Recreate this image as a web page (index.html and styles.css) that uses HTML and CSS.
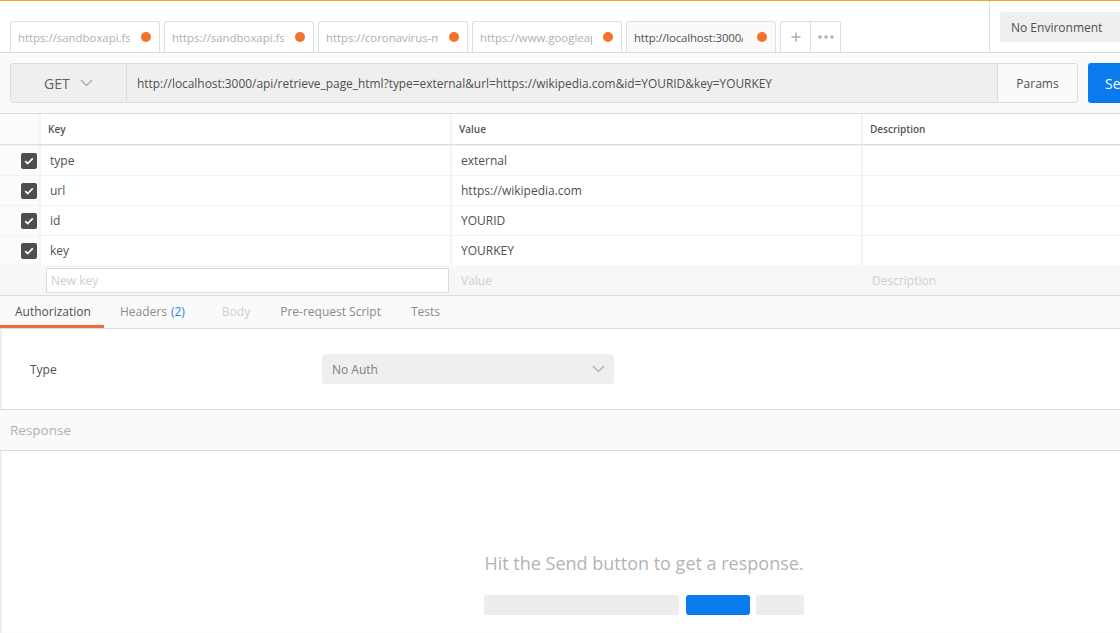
FILE: index.html
```html
<!DOCTYPE html>
<html>
<head>
<meta charset="utf-8">
<link rel="stylesheet" href="styles.css">
</head>
<body>
<div class="app">
  <div class="topbar">
    <div class="tabs">
      <div class="tab"><span class="tab-text">https://sandboxapi.fsnotify.com/v1/users</span><span class="dot"></span></div>
      <div class="tab"><span class="tab-text">https://sandboxapi.fsnotify.com/v1/events</span><span class="dot"></span></div>
      <div class="tab"><span class="tab-text">https://coronavirus-monitor.p.rapidapi.com</span><span class="dot"></span></div>
      <div class="tab"><span class="tab-text">https://www.googleapis.com/customsearch/v1</span><span class="dot"></span></div>
      <div class="tab active"><span class="tab-text">http://localhost:3000/api/retrieve_page_html</span><span class="dot"></span></div>
      <div class="tab-tools">
        <div class="tool"><svg width="10" height="10" viewBox="0 0 10 10"><path d="M5 0.5v9M0.5 5h9" stroke="#a9a9a9" stroke-width="1.4" fill="none"/></svg></div>
        <div class="tool"><svg width="16" height="4" viewBox="0 0 16 4"><circle cx="2" cy="2" r="1.8" fill="#b0b0b0"/><circle cx="8" cy="2" r="1.8" fill="#b0b0b0"/><circle cx="14" cy="2" r="1.8" fill="#b0b0b0"/></svg></div>
      </div>
    </div>
    <div class="env-area">
      <div class="env">No Environment</div>
    </div>
  </div>

  <div class="request-bar">
    <div class="method"><span>GET</span><svg class="chev" width="13" height="8" viewBox="0 0 13 8"><path d="M1 1l5.5 5.5L12 1" stroke="#aaa" stroke-width="1.3" fill="none"/></svg></div>
    <div class="url">http://localhost:3000/api/retrieve_page_html?type=external&amp;url=https://wikipedia.com&amp;id=YOURID&amp;key=YOURKEY</div>
    <div class="params">Params</div>
    <div class="send">Send</div>
    <div class="save">Save</div>
  </div>

  <div class="params-table">
    <div class="row head">
      <div class="cell check"></div>
      <div class="cell">Key</div>
      <div class="cell">Value</div>
      <div class="cell">Description</div>
    </div>
    <div class="row">
      <div class="cell check"><span class="box"><svg width="10" height="8" viewBox="0 0 10 8"><path d="M1.2 4.2l2.5 2.4L8.8 1.4" stroke="#fff" stroke-width="1.8" fill="none"/></svg></span></div>
      <div class="cell">type</div>
      <div class="cell">external</div>
      <div class="cell"></div>
    </div>
    <div class="row">
      <div class="cell check"><span class="box"><svg width="10" height="8" viewBox="0 0 10 8"><path d="M1.2 4.2l2.5 2.4L8.8 1.4" stroke="#fff" stroke-width="1.8" fill="none"/></svg></span></div>
      <div class="cell">url</div>
      <div class="cell">https://wikipedia.com</div>
      <div class="cell"></div>
    </div>
    <div class="row">
      <div class="cell check"><span class="box"><svg width="10" height="8" viewBox="0 0 10 8"><path d="M1.2 4.2l2.5 2.4L8.8 1.4" stroke="#fff" stroke-width="1.8" fill="none"/></svg></span></div>
      <div class="cell">id</div>
      <div class="cell">YOURID</div>
      <div class="cell"></div>
    </div>
    <div class="row">
      <div class="cell check"><span class="box"><svg width="10" height="8" viewBox="0 0 10 8"><path d="M1.2 4.2l2.5 2.4L8.8 1.4" stroke="#fff" stroke-width="1.8" fill="none"/></svg></span></div>
      <div class="cell">key</div>
      <div class="cell">YOURKEY</div>
      <div class="cell"></div>
    </div>
    <div class="row new">
      <div class="cell check"></div>
      <div class="cell"><div class="new-input">New key</div></div>
      <div class="cell ph">Value</div>
      <div class="cell ph">Description</div>
    </div>
  </div>

  <div class="subtabs">
    <div class="subtab first active">Authorization</div>
    <div class="subtab">Headers <span class="count">(2)</span></div>
    <div class="subtab disabled">Body</div>
    <div class="subtab">Pre-request Script</div>
    <div class="subtab">Tests</div>
  </div>

  <div class="auth">
    <div class="auth-label">Type</div>
    <div class="select"><span>No Auth</span><svg width="13" height="8" viewBox="0 0 13 8"><path d="M1 1l5.5 5.5L12 1" stroke="#b0b0b0" stroke-width="1.3" fill="none"/></svg></div>
  </div>

  <div class="response-bar">Response</div>

  <div class="empty">
    <div class="empty-text">Hit the Send button to get a response.</div>
    <div class="skeleton">
      <span class="sk sk-a"></span>
      <span class="sk sk-b"></span>
      <span class="sk sk-c"></span>
    </div>
  </div>
</div>
</body>
</html>
```

FILE: styles.css
```css
html, body {
  margin: 0;
  padding: 0;
  overflow: hidden;
  background: #fff;
}
body {
  font-family: "Open Sans", "Liberation Sans", sans-serif;
  font-size: 12px;
  color: #505050;
}
.app {
  width: 1288px;
  height: 633px;
  box-shadow: inset 3px 0 3px -2px rgba(0,0,0,0.12);
  background: #fff;
}

/* top bar */
.topbar {
  display: flex;
  height: 51px;
  border-top: 1px solid #f5a623;
  border-bottom: 1px solid #dcdcdc;
  background: #fff;
}
.tabs {
  width: 989px;
  box-sizing: border-box;
  padding-left: 10px;
  display: flex;
  align-items: flex-end;
  gap: 4px;
}
.tab {
  width: 150px;
  height: 31px;
  box-sizing: border-box;
  border: 1px solid #e0e0e0;
  border-bottom: none;
  border-radius: 3px 3px 0 0;
  display: flex;
  align-items: center;
  padding: 0 8px 0 7px;
  color: #b0b0b0;
  background: #fff;
  font-size: 11.4px;
}
.tab.active {
  color: #505050;
  background: #fafafa;
}
.tab-text {
  width: 112px;
  flex: none;
  overflow: hidden;
  white-space: nowrap;
}
.tab.active .tab-text {
  letter-spacing: -0.15px;
  width: 109px;
  margin-right: 3px;
}
.dot {
  width: 10px;
  height: 10px;
  border-radius: 50%;
  background: #f4712b;
  margin-left: 11px;
  flex: none;
}
.tab-tools {
  display: flex;
  height: 31px;
  box-sizing: border-box;
  border: 1px solid #e0e0e0;
  border-bottom: none;
  border-radius: 3px 3px 0 0;
}
.tool {
  width: 29px;
  display: flex;
  align-items: center;
  justify-content: center;
}
.tool + .tool {
  border-left: 1px solid #e0e0e0;
}
.env-area {
  flex: 1;
  border-left: 1px solid #e0e0e0;
  padding: 11px 0 0 10px;
}
.env {
  width: 220px;
  height: 30px;
  box-sizing: border-box;
  background: #efefef;
  border-radius: 3px;
  padding: 0 11px;
  display: flex;
  align-items: center;
  color: #505050;
  font-size: 12px;
}

/* request bar */
.request-bar {
  display: flex;
  padding: 10px;
  background: #fafafa;
  height: 40px;
}
.method {
  width: 117px;
  box-sizing: border-box;
  border: 1px solid #dcdcdc;
  border-radius: 3px 0 0 3px;
  background: #efefef;
  display: flex;
  align-items: center;
  padding-left: 33px;
  font-size: 14px;
  color: #606060;
}
.chev {
  margin-left: 10px;
}
.url {
  flex: 1;
  box-sizing: border-box;
  border-top: 1px solid #dcdcdc;
  border-bottom: 1px solid #dcdcdc;
  background: #efefef;
  padding: 0 10px;
  display: flex;
  align-items: center;
  white-space: nowrap;
  overflow: hidden;
  color: #505050;
  font-size: 11.9px;
}
.params {
  width: 81px;
  box-sizing: border-box;
  border: 1px solid #dcdcdc;
  border-radius: 0 3px 3px 0;
  background: #fafafa;
  display: flex;
  align-items: center;
  justify-content: center;
  color: #505050;
}
.send {
  width: 100px;
  margin-left: 10px;
  background: #097bed;
  border-radius: 3px;
  color: #fff;
  font-size: 14px;
  display: flex;
  align-items: center;
  padding-left: 17px;
  box-sizing: border-box;
}
.save {
  width: 80px;
  margin-left: 10px;
  box-sizing: border-box;
  border: 1px solid #dcdcdc;
  border-radius: 3px;
  display: flex;
  align-items: center;
  justify-content: center;
}

/* params table */
.params-table {
  border-top: 1px solid #dcdcdc;
  border-bottom: 1px solid #dcdcdc;
}
.row {
  display: grid;
  grid-template-columns: 41px 411px 411px 1fr;
  height: 30px;
  box-sizing: border-box;
  border-top: 1px solid #f2f2f2;
}
.row.head {
  height: 31px;
  border-top: none;
  border-bottom: 1px solid #dcdcdc;
  font-size: 10px;
  font-weight: 600;
  color: #555;
}
.cell {
  display: flex;
  align-items: center;
  padding-left: 9px;
  border-right: 2px solid #f4f4f4;
  background: #fff;
  white-space: nowrap;
  overflow: hidden;
}
.row.head .cell {
  padding-left: 7px;
}
.cell:last-child {
  border-right: none;
}
.cell.check {
  padding-left: 0;
  justify-content: flex-end;
  padding-right: 2px;
  background: #fbfbfb;
}
.row.head .cell.check {
  padding-left: 0;
}
.box {
  width: 16px;
  height: 16px;
  border-radius: 2px;
  background: #4e4e4e;
  display: flex;
  align-items: center;
  justify-content: center;
}
.row.new {
  border-top: 1px solid #f7f7f7;
}
.row.new .cell {
  background: #f7f7f7;
  border-right: none;
}
.row.new .cell:nth-child(2) {
  padding-left: 5px;
}
.new-input {
  width: 403px;
  height: 25px;
  box-sizing: border-box;
  border: 1px solid #dcdcdc;
  background: #fff;
  display: flex;
  align-items: center;
  padding-left: 4px;
  color: #cfcfcf;
}
.ph {
  color: #cfcfcf;
}

/* sub tabs */
.subtabs {
  display: flex;
  height: 32px;
  background: #fafafa;
  border-bottom: 1px solid #dcdcdc;
}
.subtab {
  padding: 0 14px 0 16px;
  display: flex;
  align-items: center;
  color: #8a8a8a;
  box-sizing: border-box;
  border-bottom: 3px solid transparent;
  padding-top: 1px;
}
.subtab.first {
  padding-left: 15px;
  padding-right: 13px;
}
.subtab.active {
  color: #505050;
  border-bottom-color: #f26b3a;
}
.subtab.disabled {
  color: #d0d0d0;
  padding-left: 23px;
}
.count {
  color: #2a84e6;
  margin-left: 4px;
}

/* auth */
.auth {
  height: 80px;
  display: flex;
  align-items: center;
  padding-left: 30px;
  border-bottom: 1px solid #dcdcdc;
}
.auth-label {
  width: 292px;
  color: #505050;
}
.select {
  width: 292px;
  height: 30px;
  box-sizing: border-box;
  background: #efefef;
  border-radius: 3px;
  display: flex;
  align-items: center;
  justify-content: space-between;
  padding: 0 9px 0 10px;
  color: #808080;
}

/* response */
.response-bar {
  height: 40px;
  background: #fafafa;
  border-bottom: 1px solid #dcdcdc;
  display: flex;
  align-items: center;
  padding-left: 10px;
  font-size: 13.5px;
  color: #b0b0b0;
}
.empty {
  display: flex;
  flex-direction: column;
  align-items: center;
  padding-top: 100px;
}
.empty-text {
  font-size: 18px;
  color: #b4b4b4;
  line-height: 24px;
}
.skeleton {
  display: flex;
  margin-top: 20px;
  width: 320px;
}
.sk {
  height: 20px;
  border-radius: 3px;
  background: #ededed;
}
.sk-a { width: 195px; }
.sk-b { width: 64px; background: #097bed; margin-left: 7px; }
.sk-c { width: 48px; margin-left: 6px; }
```
